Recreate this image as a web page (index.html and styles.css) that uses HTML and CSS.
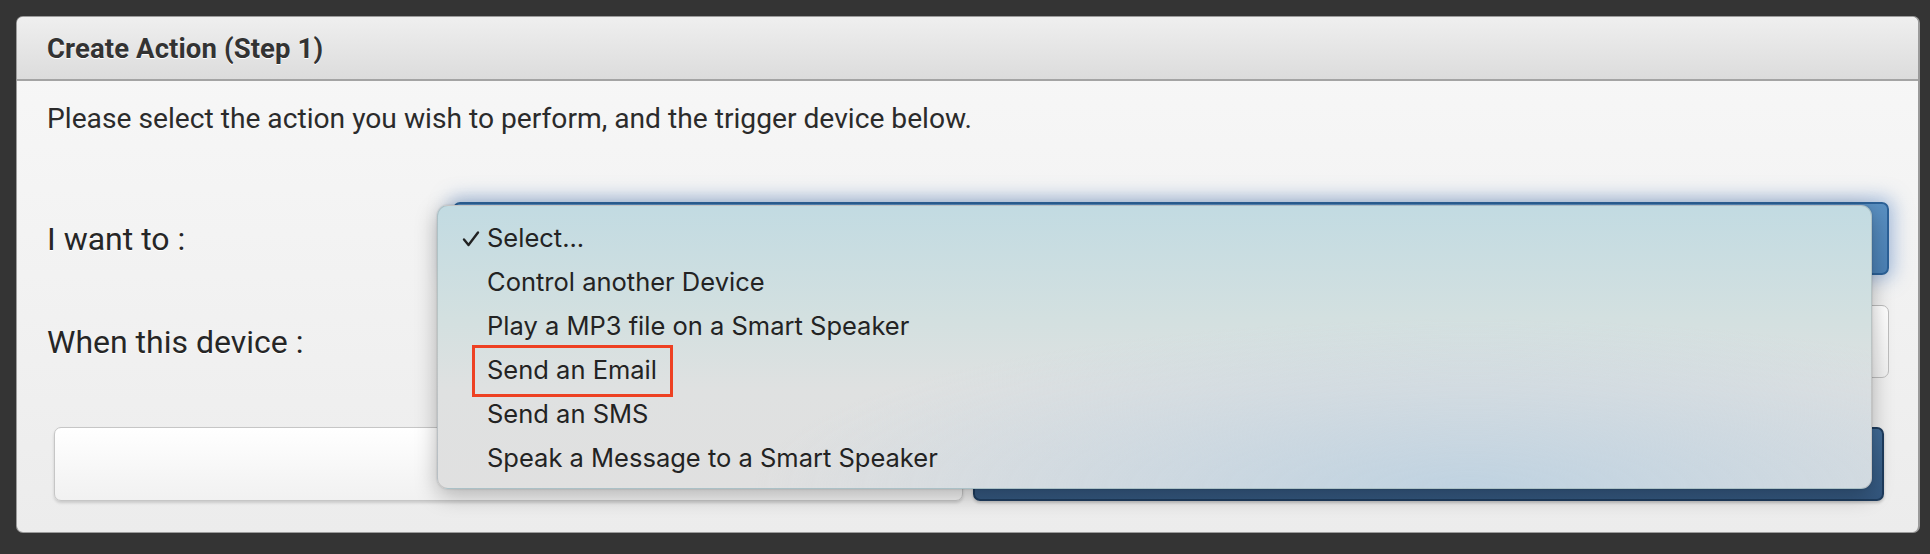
FILE: index.html
```html
<!DOCTYPE html>
<html>
<head>
<meta charset="utf-8">
<link rel="stylesheet" href="styles.css">
</head>
<body>
<div class="panel">
  <div class="panel-header">Create Action (Step 1)</div>
  <div class="panel-body">
    <p class="intro">Please select the action you wish to perform, and the trigger device below.</p>
    <div class="row">
      <div class="label">I want to :</div>
      <div class="control">
        <div class="select select-blue"></div>
        <div class="menu">
          <div class="menu-item checked"><svg class="check" width="18" height="18" viewBox="0 0 18 18"><path d="M2 9.5 L6.5 15 L16 2.5" fill="none" stroke="#222" stroke-width="2.4" stroke-linecap="round" stroke-linejoin="round"/></svg>Select...</div>
          <div class="menu-item">Control another Device</div>
          <div class="menu-item">Play a MP3 file on a Smart Speaker</div>
          <div class="menu-item"><span class="marked">Send an Email</span></div>
          <div class="menu-item">Send an SMS</div>
          <div class="menu-item">Speak a Message to a Smart Speaker</div>
        </div>
      </div>
    </div>
    <div class="row row-second">
      <div class="label">When this device :</div>
      <div class="control">
        <div class="select select-white"></div>
      </div>
    </div>
    <div class="actions">
      <div class="btn btn-light"></div>
      <div class="btn btn-dark"></div>
    </div>
  </div>
</div>
</body>
</html>
```
FILE: styles.css
```css
html, body {
  margin: 0;
  background: #343434;
}
body {
  padding: 16px 10px 21px 16px;
  font-family: Roboto, "Liberation Sans", sans-serif;
}
.panel {
  border: 1px solid #9b9b9b;
  border-right-width: 2px;
  border-radius: 7px;
  background: linear-gradient(#f8f8f8, #ececec);
  box-sizing: border-box;
  height: 517px;
}
.panel-header {
  height: 62px;
  border-bottom: 2px solid #a4a4a4;
  border-radius: 6px 6px 0 0;
  background: linear-gradient(#efefef, #dcdcdc);
  padding-left: 30px;
  display: flex;
  align-items: center;
  font-weight: bold;
  font-size: 27.5px;
  letter-spacing: 0.1px;
  color: #333;
  text-shadow: 0 1px 0 #fff;
}
.panel-body {
  padding: 0 29px 0 30px;
}
.intro {
  margin: 0;
  padding-top: 24px;
  line-height: 28px;
  font-size: 28.2px;
  color: #2b2b2b;
}
.row {
  display: flex;
  align-items: center;
  margin-top: 69px;
  height: 73px;
}
.row-second {
  margin-top: 30px;
}
.label {
  width: 406px;
  flex: none;
  font-size: 32px;
  font-weight: 400;
  color: #262626;
  text-shadow: 0 1px 0 #fff;
}
.control {
  flex: 1;
  height: 73px;
  position: relative;
}
.select {
  height: 100%;
  box-sizing: border-box;
  border-radius: 7px;
}
.select-blue {
  border: 2px solid #2c6197;
  background: linear-gradient(#5a90c2, #4b80b4);
  box-shadow: 0 0 18px 5px rgba(96, 140, 200, 0.5);
}
.select-white {
  border: 1px solid #bdbdbd;
  background: linear-gradient(#ffffff, #f0f0f0);
}
.menu {
  position: absolute;
  left: -16px;
  top: 3px;
  width: 1435px;
  height: 284px;
  box-sizing: border-box;
  padding: 10px 0 8px;
  border-radius: 11px;
  border: 1px solid rgba(0, 0, 0, 0.12);
  background:
    radial-gradient(ellipse 50% 60% at 72% 100%, rgba(190, 210, 225, 0.95), rgba(190, 210, 225, 0) 100%),
    linear-gradient(#c2dbe2 0%, #d3e0e0 40%, #dfe1e1 65%, #e0e0e0 100%);
  box-shadow: 0 6px 22px rgba(0, 0, 0, 0.28), 0 0 2px rgba(0, 0, 0, 0.2);
  font-family: Inter, "Liberation Sans", sans-serif;
  font-size: 25.5px;
  color: #232323;
  z-index: 5;
}
.menu-item {
  height: 44px;
  line-height: 44px;
  padding-left: 49px;
  position: relative;
  white-space: nowrap;
}
.check {
  position: absolute;
  left: 24px;
  top: 14px;
}
.marked {
  position: relative;
}
.marked::after {
  content: "";
  position: absolute;
  left: -15px;
  right: -16px;
  top: -9px;
  bottom: -12px;
  border: 3px solid #ee4123;
}
.actions {
  display: flex;
  gap: 10px;
  margin-top: 49px;
  height: 74px;
  padding-left: 7px;
  padding-right: 5px;
}
.btn {
  flex: 1;
  border-radius: 7px;
  box-sizing: border-box;
}
.btn-light {
  border: 1px solid #c6c6c6;
  background: linear-gradient(#ffffff, #f1f1f1);
  box-shadow: 0 2px 3px rgba(0, 0, 0, 0.15);
}
.btn-dark {
  border: 2px solid #1e3c5d;
  background: linear-gradient(#416b96, #33567d);
  box-shadow: 0 2px 3px rgba(0, 0, 0, 0.2);
}
```
